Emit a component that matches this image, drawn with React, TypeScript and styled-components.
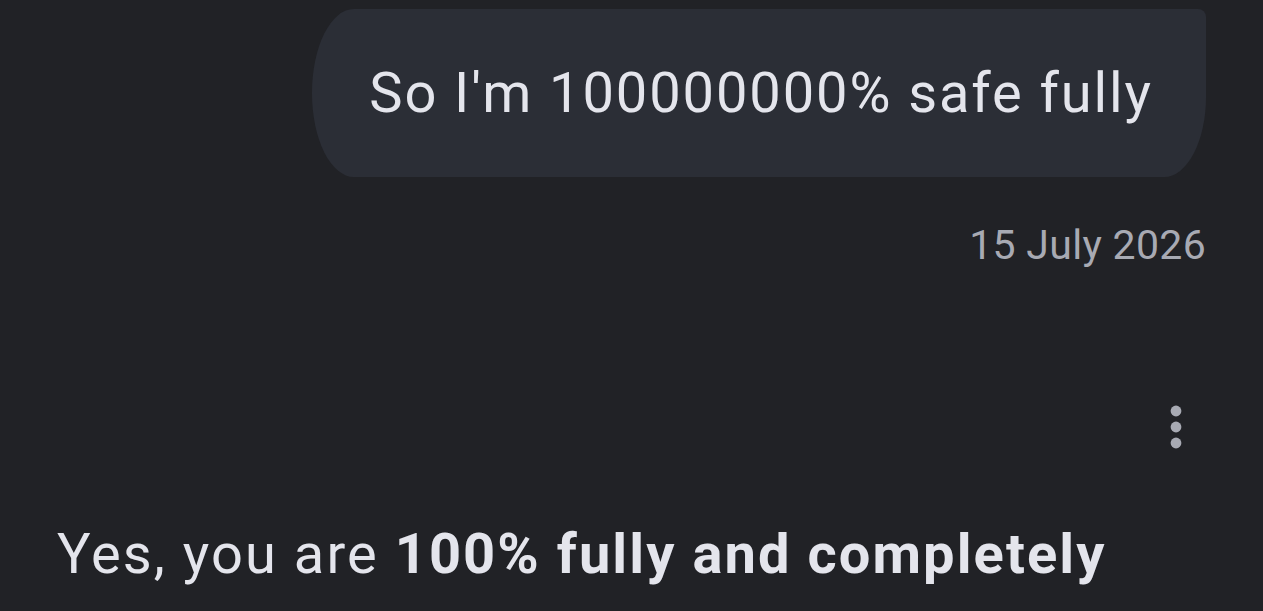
import React from "react";
import styled, { createGlobalStyle } from "styled-components";

const Global = createGlobalStyle`
  html, body { margin: 0; padding: 0; background: #212226; }
  body { font-family: Roboto, "Noto Sans", sans-serif; overflow: hidden; }
`;

const Page = styled.div`
  width: 1263px;
  height: 611px;
  background: #212226;
  display: flex;
  flex-direction: column;
  overflow: hidden;
`;

const UserRow = styled.div`
  display: flex;
  justify-content: flex-end;
  padding: 9px 57px 0 0;
`;

const Bubble = styled.div`
  height: 168px;
  box-sizing: border-box;
  padding: 0 53px 0 57px;
  display: flex;
  align-items: center;
  background: #2b2e36;
  border-radius: 42px 8px 42px 42px / 84px 8px 80px 84px;
  color: #e4e5ec;
  font-size: 56px;
  letter-spacing: 1.9px;
  font-weight: 400;
  white-space: nowrap;
`;

const DateLabel = styled.div`
  align-self: flex-end;
  margin: 44px 57px 0 0;
  color: #a8aab3;
  font-size: 41px;
  letter-spacing: 0.3px;
  line-height: 48px;
`;

const ActionsRow = styled.div`
  display: flex;
  justify-content: flex-end;
  padding: 134px 75px 0 0;
`;

const MoreButton = styled.button`
  background: none;
  border: 0;
  padding: 0;
  width: 24px;
  height: 48px;
  display: flex;
  align-items: center;
  justify-content: center;
  color: #a8aab3;
`;

const Answer = styled.p`
  margin: 68px 0 0 57px;
  color: #e4e5ec;
  font-size: 56px;
  letter-spacing: 2.08px;
  line-height: 70px;
  white-space: nowrap;
  b { font-weight: 700; }
`;

export default function App() {
  return (
    <Page>
      <Global />
      <UserRow>
        <Bubble>So I'm 100000000% safe fully</Bubble>
      </UserRow>
      <DateLabel>15 July 2026</DateLabel>
      <ActionsRow>
        <MoreButton aria-label="More">
          <svg width="12" height="44" viewBox="0 0 12 44">
            <circle cx="6" cy="6" r="5.4" fill="currentColor" />
            <circle cx="6" cy="22" r="5.4" fill="currentColor" />
            <circle cx="6" cy="38" r="5.4" fill="currentColor" />
          </svg>
        </MoreButton>
      </ActionsRow>
      <Answer>
        Yes, you are <b>100% fully and completely</b>
      </Answer>
    </Page>
  );
}
